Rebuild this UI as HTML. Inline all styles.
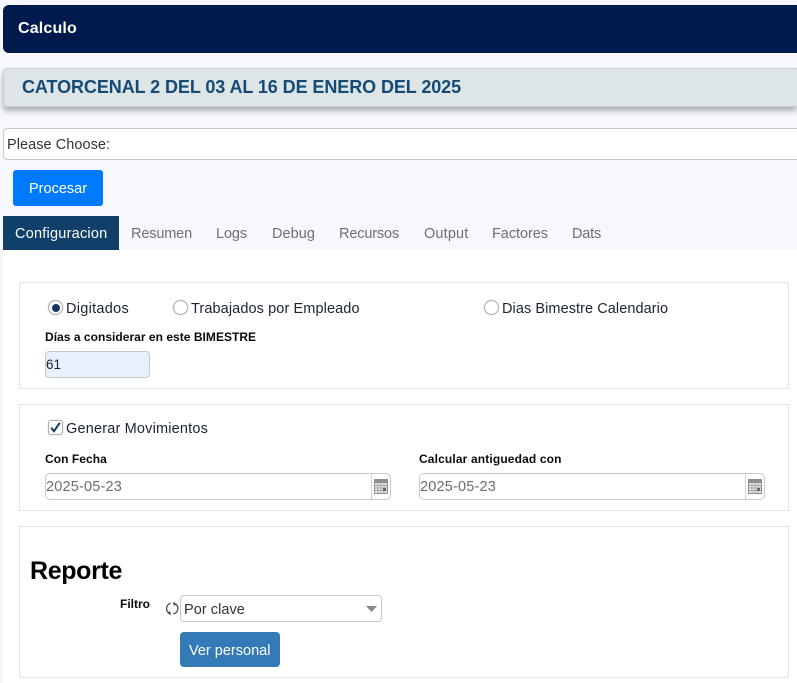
<!DOCTYPE html>
<html lang="es">
<head>
<meta charset="utf-8">
<title>Calculo</title>
<style>
html,body{margin:0;padding:0;width:797px;height:683px;overflow:hidden;background:#f7f8fd;font-family:"Liberation Sans",sans-serif;}
div,span,svg{position:absolute;box-sizing:border-box;}
.t{white-space:nowrap;line-height:20px;height:20px;font-size:14.5px;}
.lbl{font-weight:bold;font-size:12px;color:#0a0a0a;}
.tab{color:#6f6f6f;top:224px;}
.panel{left:19px;width:770px;border:1px solid #e0e6ea;background:#fff;}
.radio{width:15px;height:15px;border-radius:50%;border:1px solid #b0b0b0;background:#fff;box-shadow:0 0 1px #aaa;}
.opt{color:#1a2430;}
.date{height:27px;width:346px;border:1px solid #c8c8c8;border-radius:5px;background:#fff;}
.date i{position:absolute;right:18px;top:0;bottom:0;width:1px;background:#d0d0d0;}
.dv{color:#6c6c6c;letter-spacing:.18px;}
</style>
</head>
<body>
<div style="left:3px;top:5px;width:794px;height:48px;background:#001a4d;border-radius:6px 0 0 6px"></div>
<span class="t" style="left:18px;top:19px;color:#fff;font-weight:bold;font-size:16px;letter-spacing:.17px">Calculo</span>

<div style="left:3px;top:68px;width:794px;height:39px;background:#dde5e7;border:1px solid #c6cfd1;border-right:0;border-radius:4px 0 0 4px;box-shadow:0 4px 6px rgba(60,70,80,.4)"></div>
<span class="t" style="left:22px;top:77px;color:#154a75;font-weight:bold;font-size:18px;letter-spacing:-.08px">CATORCENAL 2 DEL 03 AL 16 DE ENERO DEL 2025</span>

<div style="left:3px;top:128px;width:794px;height:32px;background:#fff;border:1px solid #c8c8c8;border-right:0;border-radius:4px 0 0 4px"></div>
<span class="t" style="left:7px;top:135px;color:#333;letter-spacing:.05px">Please Choose:</span>

<div style="left:13px;top:170px;width:90px;height:36px;background:#007bff;border-radius:3px"></div>
<span class="t" style="left:29px;top:179px;color:#fff">Procesar</span>

<div style="left:3px;top:216px;width:116px;height:34px;background:#10406a"></div>
<span class="t" style="left:15px;top:224px;color:#fff;letter-spacing:.23px">Configuracion</span>
<span class="t tab" style="left:131px;letter-spacing:-.15px">Resumen</span>
<span class="t tab" style="left:216px;letter-spacing:-.1px">Logs</span>
<span class="t tab" style="left:272px;letter-spacing:.05px">Debug</span>
<span class="t tab" style="left:339px;letter-spacing:-.15px">Recursos</span>
<span class="t tab" style="left:424px;letter-spacing:.15px">Output</span>
<span class="t tab" style="left:492px;letter-spacing:-.05px">Factores</span>
<span class="t tab" style="left:572px;letter-spacing:-.2px">Dats</span>

<div style="left:3px;top:250px;width:794px;height:433px;background:#fff"></div>

<div class="panel" style="top:282px;height:107px"></div>
<div class="radio" style="left:48px;top:300px"></div>
<div style="left:51.500px;top:303.500px;width:8px;height:8px;border-radius:50%;background:#14385f"></div>
<span class="t opt" style="left:66px;top:299px;letter-spacing:.28px">Digitados</span>
<div class="radio" style="left:173px;top:300px"></div>
<span class="t opt" style="left:191px;top:299px;letter-spacing:.1px">Trabajados por Empleado</span>
<div class="radio" style="left:484px;top:300px"></div>
<span class="t opt" style="left:502px;top:299px;letter-spacing:.07px">Dias Bimestre Calendario</span>
<span class="t lbl" style="left:45px;top:327px;letter-spacing:.03px">Días a considerar en este BIMESTRE</span>
<div style="left:45px;top:351px;width:105px;height:27px;background:#e8f0fe;border:1px solid #c8c8c8;border-radius:4px"></div>
<span class="t" style="left:46px;top:355px;font-size:13.500px;color:#222">61</span>

<div class="panel" style="top:404px;height:107px"></div>
<div style="left:48px;top:420px;width:15px;height:15px;background:#fff;border:1px solid #b0b0b0;border-radius:3px;box-shadow:0 0 1px #aaa"></div>
<svg style="left:48px;top:420px" width="15" height="15" viewBox="0 0 15 15"><path d="M3.200 7.800L6 11.200L11.800 2.800" fill="none" stroke="#14385f" stroke-width="2"/></svg>
<span class="t opt" style="left:66px;top:419px;letter-spacing:.18px">Generar Movimientos</span>
<span class="t lbl" style="left:45px;top:449px;letter-spacing:.05px">Con Fecha</span>
<span class="t lbl" style="left:419px;top:449px;letter-spacing:.14px">Calcular antiguedad con</span>

<div class="date" style="left:45px;top:473px"><i></i></div>
<span class="t dv" style="left:46px;top:477px">2025-05-23</span>
<svg style="left:374px;top:479px" width="14" height="15" viewBox="0 0 14 15">
<rect width="14" height="15" fill="#8e8e8e"/><rect x="1" y="4" width="12" height="10" fill="#e8e8e8"/>
<path d="M4 4V14M7 4V14M10 4V14M1 6.500H13M1 9H13M1 11.500H13" stroke="#a8a8a8" stroke-width="1"/><rect x="9" y="9" width="3" height="3" fill="#666"/></svg>

<div class="date" style="left:419px;top:473px"><i></i></div>
<span class="t dv" style="left:420px;top:477px">2025-05-23</span>
<svg style="left:748px;top:479px" width="14" height="15" viewBox="0 0 14 15">
<rect width="14" height="15" fill="#8e8e8e"/><rect x="1" y="4" width="12" height="10" fill="#e8e8e8"/>
<path d="M4 4V14M7 4V14M10 4V14M1 6.500H13M1 9H13M1 11.500H13" stroke="#a8a8a8" stroke-width="1"/><rect x="9" y="9" width="3" height="3" fill="#666"/></svg>

<div class="panel" style="top:526px;height:152px"></div>
<span class="t" style="left:30px;top:561px;font-size:25px;font-weight:bold;color:#000;letter-spacing:-.35px">Reporte</span>
<span class="t lbl" style="left:120px;top:594px">Filtro</span>
<svg style="left:165px;top:601px" width="15" height="15" viewBox="0 0 15 15" fill="none" stroke="#444" stroke-width="1.200"><path d="M5.800 2.300A5.500 5.500 0 0 0 4 12.200"/><path d="M8.200 12.900A5.500 5.500 0 0 0 10.600 3"/><path d="M8 .8L11.200 2.800L9 5.200Z" fill="#444" stroke="none"/><path d="M6 14.200L2.800 12.200L5 9.800Z" fill="#444" stroke="none"/></svg>
<div style="left:180px;top:595px;width:202px;height:27px;background:#fff;border:1px solid #c8c8c8;border-radius:4px"></div>
<span class="t" style="left:184px;top:600px;color:#333;letter-spacing:.05px">Por clave</span>
<svg style="left:366px;top:606px" width="11" height="6" viewBox="0 0 11 6"><path d="M0 0H11L5.500 6Z" fill="#888"/></svg>
<div style="left:180px;top:632px;width:100px;height:35px;background:#337ab7;border-radius:4px"></div>
<span class="t" style="left:189px;top:641px;color:#fff">Ver personal</span>
</body>
</html>
